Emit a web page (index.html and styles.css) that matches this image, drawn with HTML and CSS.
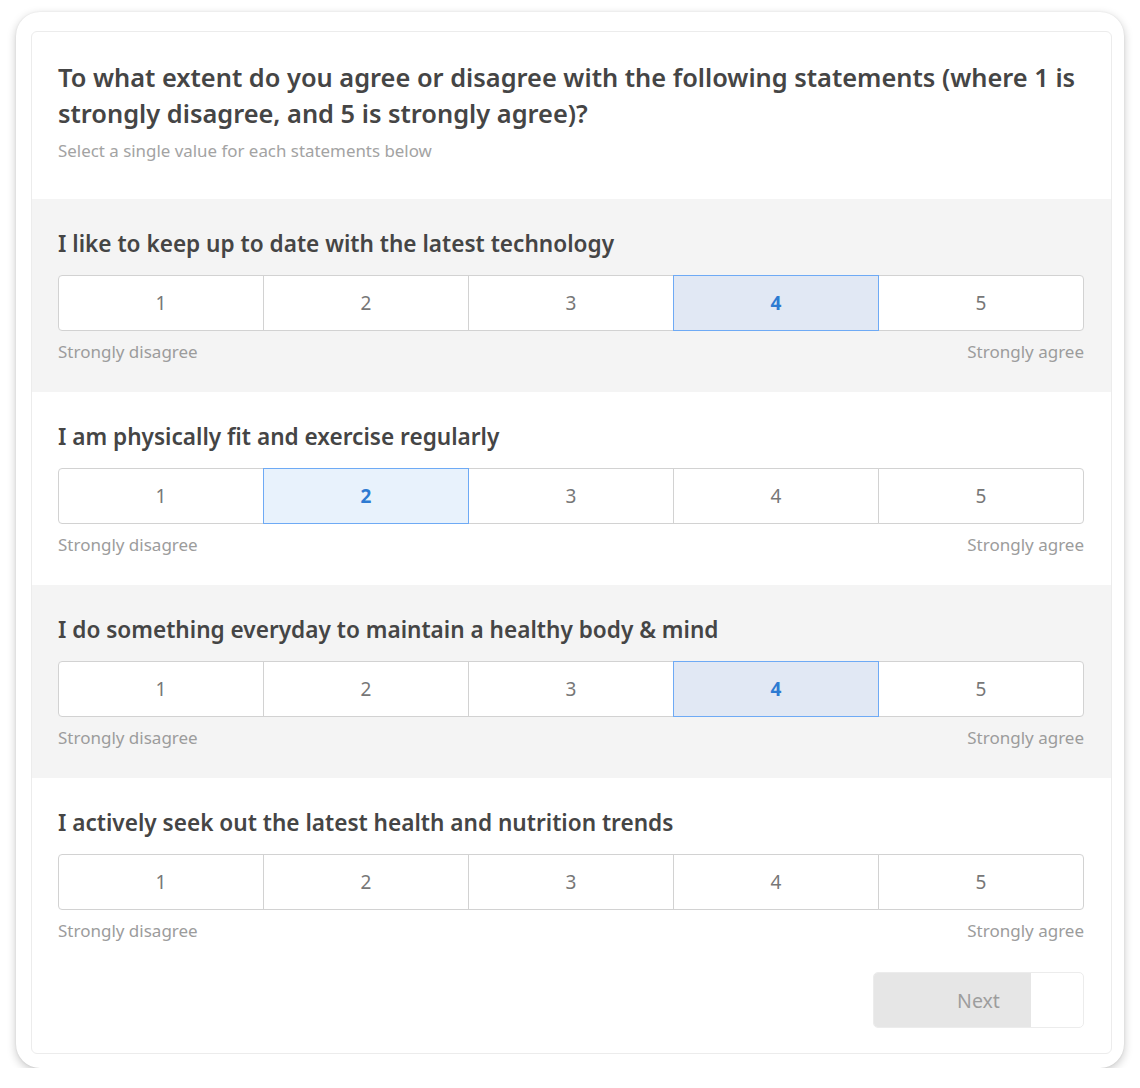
FILE: index.html
```html
<!DOCTYPE html>
<html>
<head>
<meta charset="utf-8">
<link rel="stylesheet" href="styles.css">
</head>
<body>
<div class="frame">
  <div class="card">
    <div class="header">
      <h1 class="title">To what extent do you agree or disagree with the following statements (where 1 is strongly disagree, and 5 is strongly agree)?</h1>
      <p class="hint">Select a single value for each statements below</p>
    </div>

    <div class="item shaded">
      <h2 class="question">I like to keep up to date with the latest technology</h2>
      <div class="scale">
        <div class="opt">1</div><div class="opt">2</div><div class="opt">3</div><div class="opt selected">4</div><div class="opt">5</div>
      </div>
      <div class="ends"><span>Strongly disagree</span><span>Strongly agree</span></div>
    </div>

    <div class="item">
      <h2 class="question">I am physically fit and exercise regularly</h2>
      <div class="scale">
        <div class="opt">1</div><div class="opt selected">2</div><div class="opt">3</div><div class="opt">4</div><div class="opt">5</div>
      </div>
      <div class="ends"><span>Strongly disagree</span><span>Strongly agree</span></div>
    </div>

    <div class="item shaded">
      <h2 class="question">I do something everyday to maintain a healthy body &amp; mind</h2>
      <div class="scale">
        <div class="opt">1</div><div class="opt">2</div><div class="opt">3</div><div class="opt selected">4</div><div class="opt">5</div>
      </div>
      <div class="ends"><span>Strongly disagree</span><span>Strongly agree</span></div>
    </div>

    <div class="item">
      <h2 class="question">I actively seek out the latest health and nutrition trends</h2>
      <div class="scale">
        <div class="opt">1</div><div class="opt">2</div><div class="opt">3</div><div class="opt">4</div><div class="opt">5</div>
      </div>
      <div class="ends"><span>Strongly disagree</span><span>Strongly agree</span></div>
    </div>

    <div class="footer">
      <div class="next"><span class="next-fill"></span><span class="next-label">Next</span></div>
    </div>
  </div>
</div>
</body>
</html>
```
FILE: styles.css
```css
* { box-sizing: border-box; }
html, body {
  margin: 0;
  padding: 0;
  background: #ffffff;
  font-family: "Noto Sans", "Open Sans", sans-serif;
}
.frame {
  margin: 12px 0 0 16px;
  width: 1108px;
  height: 1056px;
  background: #ffffff;
  border-radius: 24px;
  box-shadow: 0 3px 10px rgba(0, 0, 0, 0.22), 0 0 2px rgba(0, 0, 0, 0.08);
  padding: 19px 12px 14px 15px;
}
.card {
  width: 1081px;
  height: 1023px;
  border: 1px solid #ececec;
  border-radius: 6px;
  background: #ffffff;
  display: flex;
  flex-direction: column;
  overflow: hidden;
}
.header {
  padding: 27px 20px 36px 26px;
}
.title {
  margin: 0;
  font-size: 25.4px;
  line-height: 36px;
  font-weight: 600;
  color: #454545;
}
.hint {
  margin: 8px 0 0;
  font-size: 16.9px;
  line-height: 24px;
  color: #a3a3a3;
}
.item {
  height: 193px;
  padding: 30px 27px 0 26px;
}
.item.shaded {
  background: #f4f4f4;
}
.question {
  margin: 0;
  font-size: 22.6px;
  line-height: 30px;
  font-weight: 600;
  color: #454545;
}
.scale {
  display: flex;
  margin-top: 16px;
  padding-left: 1px;
}
.opt {
  flex: 1;
  height: 56px;
  margin-left: -1px;
  background: #ffffff;
  border: 1px solid #d2d2d2;
  display: flex;
  align-items: center;
  justify-content: center;
  font-size: 19px;
  color: #777777;
  position: relative;
}
.opt:first-child {
  border-radius: 4px 0 0 4px;
}
.opt:last-child {
  border-radius: 0 4px 4px 0;
}
.opt.selected {
  z-index: 1;
  border-color: #6eaaf5;
  background: #e8f2fc;
  color: #2e7bd2;
  font-weight: 700;
}
.shaded .opt.selected {
  background: #e1e8f4;
}
.ends {
  display: flex;
  justify-content: space-between;
  margin-top: 9px;
  font-size: 17px;
  line-height: 24px;
  color: #9c9c9c;
}
.footer {
  display: flex;
  justify-content: flex-end;
  padding: 1px 27px 0 0;
}
.next {
  position: relative;
  width: 211px;
  height: 56px;
  border: 1px solid #ececec;
  border-radius: 5px;
  overflow: hidden;
  display: flex;
  align-items: center;
  justify-content: center;
}
.next-fill {
  position: absolute;
  left: 0;
  top: 0;
  bottom: 0;
  width: 75%;
  background: #e6e6e6;
}
.next-label {
  position: relative;
  font-size: 19.5px;
  color: #9d9d9d;
}
```
